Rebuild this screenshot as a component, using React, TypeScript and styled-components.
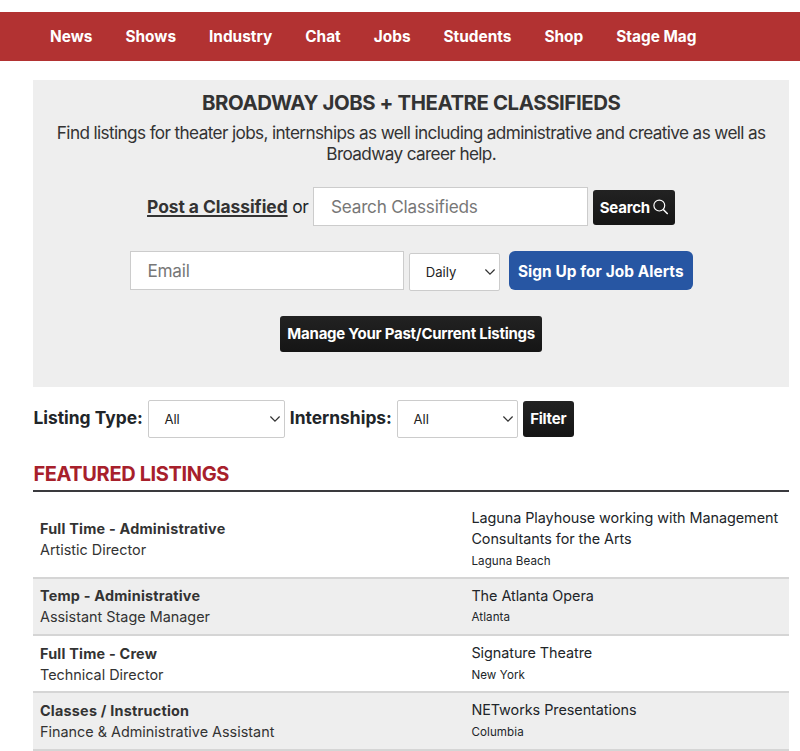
import * as React from "react";
import styled, { createGlobalStyle } from "styled-components";

const GlobalStyle = createGlobalStyle`
  * {
    box-sizing: border-box;
  }

  body {
    margin: 0;
    background: #fff;
    color: #212529;
    font-family: Inter, "Liberation Sans", sans-serif;
    overflow: hidden;
  }
`;

const Page = styled.div`
  height: 751px;
  padding-top: 11.6px;
  overflow: hidden;
`;

const NavBar = styled.nav`
  display: flex;
  align-items: center;
  gap: 33px;
  height: 49.2px;
  padding: 1px 0 0 50px;
  background: #b23232;
`;

const NavLink = styled.a`
  color: #fff;
  font-size: 15.4px;
  font-weight: 700;
  line-height: 20px;
  white-space: nowrap;
`;

const Content = styled.main`
  margin: 19px 11px 0 33.4px;
`;

const Hero = styled.section`
  display: flex;
  flex-direction: column;
  align-items: center;
  height: 307px;
  padding-top: 10px;
  background: #eee;
  color: #333;
`;

const Title = styled.h1`
  margin: 0;
  font-size: 20.4px;
  font-weight: 700;
  line-height: 26px;
  letter-spacing: -0.42px;
  white-space: nowrap;
`;

const Intro = styled.p`
  margin: 6px 0 0;
  font-size: 17.2px;
  line-height: 21.6px;
  letter-spacing: -0.63px;
  text-align: center;
  white-space: nowrap;
`;

type TFormRow = {
  $top: number;
};

const FormRow = styled.form<TFormRow>`
  display: flex;
  align-items: center;
  gap: 4.8px;
  margin-top: ${props => props.$top}px;
`;

const PostText = styled.span`
  padding-top: 1px;
  font-size: 17.4px;
  line-height: 24px;
  letter-spacing: -0.3px;
  color: #212529;
  white-space: nowrap;

  a {
    color: #333;
    font-weight: 700;
    letter-spacing: -0.04px;
    text-decoration: underline;
    text-decoration-thickness: 1.6px;
    text-underline-offset: 2px;
    text-decoration-skip-ink: none;
  }
`;

const Input = styled.input`
  width: 274.6px;
  height: 39px;
  padding: 0 16.6px;
  border: 1px solid #ccc;
  border-radius: 0;
  outline: none;
  background: #fff;
  color: #333;
  font-family: inherit;
  font-size: 17.2px;
  letter-spacing: -0.22px;

  &::placeholder {
    color: #777;
    opacity: 1;
  }
`;

const Button = styled.button`
  display: flex;
  align-items: center;
  justify-content: center;
  gap: 3px;
  height: 35.4px;
  padding: 0 7px;
  border: 0;
  border-radius: 3px;
  background: linear-gradient(#222, #151515);
  color: #fff;
  font-family: inherit;
  font-size: 15px;
  font-weight: 700;
  letter-spacing: -0.24px;
  white-space: nowrap;
`;

const SearchButton = styled(Button)`
  width: 82.6px;
  margin-top: 2px;
`;

const ManageButton = styled(Button)`
  width: 262px;
  margin-top: 25.2px;
`;

const FilterButton = styled(Button)`
  width: 50.6px;
`;

const AlertButton = styled(Button)`
  width: 183.6px;
  height: 39px;
  margin-left: 4px;
  padding-top: 2px;
  border-radius: 6px;
  background: #2756a3;
  font-size: 15.4px;
  letter-spacing: 0.06px;
`;

type TSelectBox = {
  $width: number;
  $shift?: number;
};

const SelectBox = styled.div<TSelectBox>`
  display: flex;
  align-items: center;
  justify-content: space-between;
  width: ${props => props.$width}px;
  height: 38.4px;
  margin-top: ${props => props.$shift || 0}px;
  padding: 0 3px 0 15.6px;
  border: 1px solid #ccc;
  border-radius: 2px;
  background: #fff;
  color: #222;
  font-size: 13.1px;
  line-height: 18px;
`;

const Filters = styled.div`
  display: flex;
  align-items: center;
  gap: 5px;
  height: 38px;
  margin-top: 13.2px;
`;

const Label = styled.label`
  padding-bottom: 2px;
  font-size: 17.4px;
  font-weight: 700;
  line-height: 22px;
  letter-spacing: 0;
  white-space: nowrap;
`;

const Heading = styled.h2`
  height: 41px;
  margin: 13.1px 0 8.2px;
  padding-top: 11px;
  border-bottom: 2px solid #3a3a3e;
  color: #a7202b;
  font-size: 20px;
  font-weight: 700;
  line-height: 24px;
  letter-spacing: -0.36px;
`;

const Row = styled.div<{ $tall?: boolean }>`
  display: grid;
  grid-template-columns: 431.4px 1fr;
  align-items: center;
  height: ${props => (props.$tall ? "78.4px" : "57.4px")};
  padding: ${props => (props.$tall ? "1.6px" : "0.2px")} 6.6px 0;
  border-bottom: 2px solid #d5d5d5;

  &:nth-child(even) {
    background: #eee;
  }
`;

const Cell = styled.div`
  color: #333;
  font-size: 14.4px;
  line-height: 21.3px;
  white-space: nowrap;
`;

const Company = styled(Cell)`
  color: #212529;
  letter-spacing: -0.05px;
`;

const JobType = styled.strong`
  display: block;
  font-weight: 700;
  letter-spacing: 0.22px;
`;

const City = styled.small`
  display: block;
  padding-top: 1.4px;
  font-size: 11.6px;
  line-height: 21px;
  letter-spacing: 0.1px;
`;

const Chevron = () => (
  <svg width="12" height="8" viewBox="0 0 12 8" fill="none">
    <path d="M1.4 1.5L6 6.1l4.6-4.6" stroke="#333" strokeWidth="1.2" />
  </svg>
);

const SearchIcon = () => (
  <svg width="16" height="16" viewBox="0 0 16 16" fill="none" stroke="#fff">
    <circle cx="6.5" cy="6.5" r="5.6" strokeWidth="1.2" />
    <path d="M10.6 10.6l4.6 4.6" strokeWidth="1.6" />
  </svg>
);

interface ISelectProps {
  width: number;
  value: string;
  shift?: number;
}

const Select = ({ width, value, shift }: ISelectProps) => (
  <SelectBox $width={width} $shift={shift}>
    {value}
    <Chevron />
  </SelectBox>
);

const links = ["News", "Shows", "Industry", "Chat", "Jobs", "Students", "Shop", "Stage Mag"];

interface IListing {
  type: string;
  title: string;
  company: React.ReactNode;
  city: string;
  tall?: boolean;
}

const listings: IListing[] = [
  {
    type: "Full Time - Administrative",
    title: "Artistic Director",
    company: (
      <>
        Laguna Playhouse working with Management
        <br />
        Consultants for the Arts
      </>
    ),
    city: "Laguna Beach",
    tall: true
  },
  {
    type: "Temp - Administrative",
    title: "Assistant Stage Manager",
    company: "The Atlanta Opera",
    city: "Atlanta"
  },
  {
    type: "Full Time - Crew",
    title: "Technical Director",
    company: "Signature Theatre",
    city: "New York"
  },
  {
    type: "Classes / Instruction",
    title: "Finance & Administrative Assistant",
    company: "NETworks Presentations",
    city: "Columbia"
  }
];

const App = () => (
  <Page>
    <GlobalStyle />
    <NavBar>
      {links.map(link => (
        <NavLink key={link}>{link}</NavLink>
      ))}
    </NavBar>
    <Content>
      <Hero>
        <Title>BROADWAY JOBS + THEATRE CLASSIFIEDS</Title>
        <Intro>
          Find listings for theater jobs, internships as well including administrative and creative as well as
          <br />
          Broadway career help.
        </Intro>
        <FormRow $top={22}>
          <PostText>
            <a>Post a Classified</a> or
          </PostText>
          <Input placeholder="Search Classifieds" />
          <SearchButton type="button">
            Search
            <SearchIcon />
          </SearchButton>
        </FormRow>
        <FormRow $top={24.6}>
          <Input placeholder="Email" />
          <Select width={91} value="Daily" shift={2} />
          <AlertButton type="button">Sign Up for Job Alerts</AlertButton>
        </FormRow>
        <ManageButton type="button">Manage Your Past/Current Listings</ManageButton>
      </Hero>
      <Filters>
        <Label>Listing Type:</Label>
        <Select width={137} value="All" />
        <Label>Internships:</Label>
        <Select width={121} value="All" />
        <FilterButton type="button">Filter</FilterButton>
      </Filters>
      <Heading>FEATURED LISTINGS</Heading>
      <div>
        {listings.map(item => (
          <Row key={item.type} $tall={item.tall}>
            <Cell>
              <JobType>{item.type}</JobType>
              {item.title}
            </Cell>
            <Company>
              {item.company}
              <City>{item.city}</City>
            </Company>
          </Row>
        ))}
      </div>
    </Content>
  </Page>
);

export default App;
